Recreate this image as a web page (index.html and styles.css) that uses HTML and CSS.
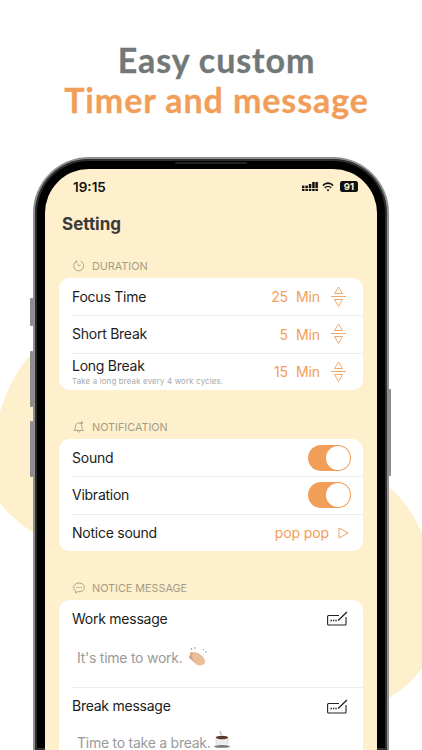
FILE: index.html

```html
<!DOCTYPE html>
<html>
<head>
<meta charset="UTF-8">
<title>Setting</title>
<link rel="stylesheet" href="styles.css">
</head>
<body>
<svg class="blob" viewBox="0 0 422 750" width="422" height="750">
  <path d="M40 345 C18 366 8 387 0 412 L0 503 C10 516 22 526 40 537 Z" fill="#fff0cd"/>
  <path d="M385 484 C402 497 414 514 422 534 L422 668 C412 682 400 692 385 700 Z" fill="#fff0cd"/>
</svg>
<h1 class="headline">
  <span class="headline-grey">Easy custom</span>
  <span class="headline-orange">Timer and message</span>
</h1>
<div class="phone">
  <i class="side-btn side-a"></i>
  <i class="side-btn side-b"></i>
  <i class="side-btn side-c"></i>
  <i class="side-btn side-d"></i>
  <div class="speaker"></div>
  <div class="screen">
    <div class="status">
      <span class="clock">19:15</span>
      <span class="status-icons">
        <svg width="16" height="9" viewBox="0 0 16 9" fill="#111">
          <rect x="0" y="3.6" width="2.5" height="2.4"/><rect x="0" y="6.8" width="2.5" height="2.2"/>
          <rect x="3.4" y="3.6" width="2.5" height="2.4"/><rect x="3.4" y="6.8" width="2.5" height="2.2"/>
          <rect x="6.8" y="2" width="2.5" height="4"/><rect x="6.8" y="6.8" width="2.5" height="2.2"/>
          <rect x="10.2" y="0" width="2.5" height="6"/><rect x="10.2" y="6.8" width="2.5" height="2.2"/>
          <rect x="13.4" y="0" width="2.5" height="6"/><rect x="13.4" y="6.8" width="2.5" height="2.2"/>
        </svg>
        <svg width="12" height="10" viewBox="0 0 14 10" preserveAspectRatio="none" fill="none" stroke="#111" stroke-width="1.7">
          <path d="M1 3.6 C4.4 .4 9.6 .4 13 3.6"/>
          <path d="M3.3 5.9 C5.4 4 8.6 4 10.7 5.9"/>
          <path d="M7 9.6 L5.3 7.8 C6.3 7 7.7 7 8.7 7.8 Z" fill="#111" stroke="none"/>
        </svg>
        <span class="battery">91</span>
      </span>
    </div>
    <h2 class="title">Setting</h2>

    <div class="group-label">
      <svg class="label-icon" width="12" height="12" viewBox="0 0 12 12" fill="none" stroke="#a39c86" stroke-width=".9">
        <path d="M3.6 1.3 A5 5 0 1 0 7.6 1.2"/><path d="M2.4 .9 L3.9 1.2 L3.5 2.8"/><path d="M4.2 3.6 L6 6 L7.6 5"/>
      </svg>
      DURATION
    </div>
    <div class="card">
      <div class="row">
        <span class="row-name">Focus Time</span>
        <span class="value"><b>25</b><b>Min</b></span>
        <svg class="stepper" width="15" height="22" viewBox="0 0 15 22" fill="none" stroke="#f19e59" stroke-width=".9">
          <path d="M7.5 1 L11.5 7.5 L3.5 7.5 Z"/><path d="M0 10.5 H15"/><path d="M3.5 13.5 L11.5 13.5 L7.5 20.5 Z"/>
        </svg>
      </div>
      <div class="row">
        <span class="row-name">Short Break</span>
        <span class="value"><b>5</b><b>Min</b></span>
        <svg class="stepper" width="15" height="22" viewBox="0 0 15 22" fill="none" stroke="#f19e59" stroke-width=".9">
          <path d="M7.5 1 L11.5 7.5 L3.5 7.5 Z"/><path d="M0 10.5 H15"/><path d="M3.5 13.5 L11.5 13.5 L7.5 20.5 Z"/>
        </svg>
      </div>
      <div class="row">
        <span class="row-stack">
          <span class="row-name">Long Break</span>
          <span class="row-hint">Take a long break every 4 work cycles.</span>
        </span>
        <span class="value"><b>15</b><b>Min</b></span>
        <svg class="stepper" width="15" height="22" viewBox="0 0 15 22" fill="none" stroke="#f19e59" stroke-width=".9">
          <path d="M7.5 1 L11.5 7.5 L3.5 7.5 Z"/><path d="M0 10.5 H15"/><path d="M3.5 13.5 L11.5 13.5 L7.5 20.5 Z"/>
        </svg>
      </div>
    </div>

    <div class="group-label">
      <svg class="label-icon" width="12" height="12" viewBox="0 0 12 12" fill="none" stroke="#a39c86" stroke-width=".9">
        <path d="M1 9.4 C2.4 8.2 2.4 6.8 2.6 5 C2.8 3 4 2 5.6 2 C7.4 2 8.6 3 8.8 5 C9 6.8 9.2 8.2 10.6 9.4 Z"/>
        <path d="M4.6 10.4 C5 11.4 6.6 11.4 7 10.4"/>
        <circle cx="8.8" cy="1.8" r="1.2" fill="#a39c86" stroke="none"/>
      </svg>
      NOTIFICATION
    </div>
    <div class="card">
      <div class="row">
        <span class="row-name">Sound</span>
        <span class="toggle"><i></i></span>
      </div>
      <div class="row">
        <span class="row-name">Vibration</span>
        <span class="toggle"><i></i></span>
      </div>
      <div class="row">
        <span class="row-name">Notice sound</span>
        <span class="value value-sound">pop pop</span>
        <svg class="play" width="11" height="12" viewBox="0 0 11 12" fill="none" stroke="#f19e59" stroke-width="1">
          <path d="M1 1 L10 6 L1 11 Z"/>
        </svg>
      </div>
    </div>

    <div class="group-label">
      <svg class="label-icon" width="12" height="12" viewBox="0 0 12 12" fill="none" stroke="#a39c86" stroke-width=".9">
        <path d="M6 1 C9 1 11.4 2.9 11.4 5.4 C11.4 7.9 9 9.8 6 9.8 L4.4 9.7 L2.4 11 L2.5 8.9 C1.2 8 .6 6.8 .6 5.4 C.6 2.9 3 1 6 1 Z"/>
        <circle cx="3.8" cy="5.4" r=".7" fill="#a39c86" stroke="none"/><circle cx="6" cy="5.4" r=".7" fill="#a39c86" stroke="none"/><circle cx="8.2" cy="5.4" r=".7" fill="#a39c86" stroke="none"/>
      </svg>
      NOTICE MESSAGE
    </div>
    <div class="card">
      <div class="message">
        <div class="message-head">
          <span class="row-name">Work message</span>
          <svg class="edit" width="21" height="15" viewBox="0 0 21 15" fill="none" stroke="#222" stroke-width="1.1">
            <path d="M12 4.5 H1.6 Q.6 4.5 .6 5.5 V13 Q.6 14 1.6 14 H18 Q19 14 19 13 V6"/>
            <path d="M11 9.5 L20 1" stroke-width="1.3"/>
            <path d="M3.5 9.5 H10" stroke-dasharray="1.4 1" stroke-width="1.4"/>
          </svg>
        </div>
        <div class="message-text">It's time to work.
          <svg class="emoji" width="18" height="20" viewBox="0 0 18 20">
            <path d="M3 7 L11 13 M2 10 L9 16" stroke="#d9a57f" stroke-width="4" stroke-linecap="round"/>
            <path d="M5 5 C9 5 15 9 16 14 C16.5 18 12 19 9 18 C6 17 3 12 3 8 Z" fill="#e9bd98"/>
            <path d="M2 1 L3 3 M6 0 L6 2 M14 3 L15 2 M16 5 L17.5 4.5" stroke="#777" stroke-width=".8"/>
          </svg>
        </div>
      </div>
      <div class="message">
        <div class="message-head">
          <span class="row-name">Break message</span>
          <svg class="edit" width="21" height="15" viewBox="0 0 21 15" fill="none" stroke="#222" stroke-width="1.1">
            <path d="M12 4.5 H1.6 Q.6 4.5 .6 5.5 V13 Q.6 14 1.6 14 H18 Q19 14 19 13 V6"/>
            <path d="M11 9.5 L20 1" stroke-width="1.3"/>
            <path d="M3.5 9.5 H10" stroke-dasharray="1.4 1" stroke-width="1.4"/>
          </svg>
        </div>
        <div class="message-text">Time to take a break.<svg class="emoji emoji-cup" width="18" height="18" viewBox="0 0 18 18">
            <path d="M7 1 C6 2.5 9 3 8 5" stroke="#999" fill="none"/>
            <path d="M3 7 H15 V12 C15 15 12 16 9 16 C6 16 3 15 3 12 Z" fill="#eee" stroke="#bbb" stroke-width=".5"/>
            <ellipse cx="9" cy="7.5" rx="6" ry="1.8" fill="#5a3a28"/>
            <ellipse cx="9" cy="16.4" rx="8" ry="1.4" fill="#777"/>
          </svg>
        </div>
      </div>
    </div>
  </div>
</div>
</body>
</html>
```

FILE: styles.css

```css
html, body {
  margin: 0;
  padding: 0;
  height: 750px;
  overflow: hidden;
  background: #fff;
}
body {
  position: relative;
  font-family: Inter, "Liberation Sans", sans-serif;
}
.blob {
  position: absolute;
  left: 0;
  top: 0;
}
.headline {
  position: relative;
  margin: 0;
  padding: 40px 0 0 11px;
  text-align: center;
  font-family: Lato, sans-serif;
  font-size: 34px;
  font-weight: 700;
  line-height: 40px;
  letter-spacing: 0.9px;
  -webkit-text-stroke: 0.3px;
}
.headline span {
  display: block;
}
.headline-grey {
  color: #717877;
}
.headline-orange {
  color: #f19e59;
}

/* phone frame */
.phone {
  position: relative;
  box-sizing: border-box;
  width: 356px;
  height: 593px;
  margin: 37px 0 0 33px;
  padding: 10px 10px 0;
  background: #000;
  border: 2px solid #8f9090;
  border-bottom: 0;
  border-radius: 56px 56px 0 0;
  box-shadow: inset 0 0 0 2px #2e2e2e;
}
.side-btn {
  position: absolute;
  width: 3px;
  background: #8d8d8d;
  border-radius: 1px;
}
.side-a { left: -5px; top: 139px; height: 28px; }
.side-b { left: -5px; top: 192px; height: 56px; }
.side-c { left: -5px; top: 262px; height: 56px; }
.side-d { right: -4px; top: 230px; height: 87px; }
.speaker {
  position: absolute;
  left: 140px;
  top: 3px;
  width: 72px;
  height: 2px;
  background: #222;
  border-radius: 1px;
}
.screen {
  box-sizing: border-box;
  height: 581px;
  padding: 0 14px;
  background: #fff0cd;
  border-radius: 44px 44px 0 0;
  overflow: hidden;
}

/* status bar */
.status {
  display: flex;
  justify-content: space-between;
  align-items: center;
  height: 17px;
  padding: 9px 5px 0 14px;
}
.clock {
  font-size: 13.5px;
  font-weight: 600;
  color: #111;
}
.status-icons {
  display: flex;
  align-items: center;
  gap: 4px;
}
.battery {
  width: 18px;
  height: 11px;
  margin-left: 2px;
  background: #111;
  border-radius: 2.5px;
  color: #fff0cd;
  font-size: 9.5px;
  font-weight: 700;
  line-height: 11px;
  text-align: center;
}

.title {
  margin: 17px 0 0 3px;
  font-size: 17px;
  font-weight: 700;
  line-height: 24px;
  color: #3a3a38;
}

/* groups */
.group-label {
  display: flex;
  align-items: center;
  gap: 7px;
  height: 14px;
  margin: 30px 0 5px 14px;
  font-size: 10.8px;
  color: #a39c86;
}
.title + .group-label {
  margin-top: 23px;
}
.card {
  background: #fff;
  border-radius: 11px;
  overflow: hidden;
}
.row {
  display: flex;
  align-items: center;
  height: 37.5px;
  margin-left: 13px;
  padding-right: 17px;
  box-sizing: border-box;
  border-top: 1px solid #eeeeee;
}
.row:first-child {
  border-top: 0;
  height: 37px;
}
.row-name {
  font-size: 14px;
  letter-spacing: -0.25px;
  line-height: 16px;
  color: #1c1c1c;
}
.row-stack {
  display: flex;
  flex-direction: column;
  gap: 2px;
}
.row-hint {
  font-size: 7.8px;
  line-height: 10px;
  color: #a8a8a8;
  letter-spacing: 0.2px;
}
.value {
  display: flex;
  gap: 8px;
  margin-left: auto;
  margin-right: 11px;
  font-size: 14px;
  letter-spacing: -0.1px;
  color: #f19e59;
}
.value b {
  font-weight: 400;
}
.value-sound {
  margin-right: 9px;
  font-size: 14px;
}
.stepper {
  display: block;
}
.play {
  margin-right: -3px;
}
.toggle {
  display: flex;
  justify-content: flex-end;
  align-items: center;
  box-sizing: border-box;
  width: 43px;
  height: 26px;
  margin-left: auto;
  margin-right: -5px;
  padding-right: 1px;
  background: #f19e59;
  border-radius: 13px;
}
.toggle i {
  width: 24px;
  height: 24px;
  background: #fff;
  border-radius: 50%;
}

/* messages */
.message {
  height: 87px;
  margin-left: 13px;
  padding-right: 15px;
  box-sizing: border-box;
  border-top: 1px solid #eeeeee;
}
.message:first-child {
  border-top: 0;
}
.message-head {
  display: flex;
  justify-content: space-between;
  align-items: center;
  height: 37px;
}
.message + .message .message-head {
  height: 36px;
}
.message-text {
  display: flex;
  align-items: center;
  gap: 7px;
  margin: 2px 0 0 5px;
  height: 36px;
  font-size: 14px;
  line-height: 13px;
  letter-spacing: -0.25px;
  color: #9a9a9a;
}
.message + .message .message-text {
  gap: 2px;
  height: 13px;
  margin-top: 12px;
  align-items: flex-start;
}
.emoji {
  flex: none;
}
.emoji-cup {
  margin-top: -6px;
}
```
